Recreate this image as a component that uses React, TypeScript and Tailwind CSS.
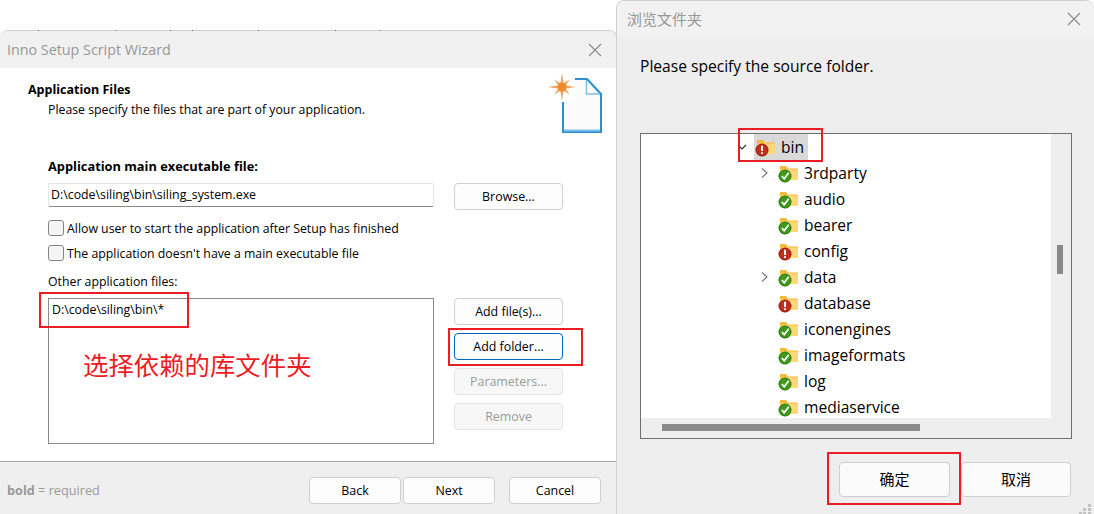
import React from "react";

const uiFont = "font-['Open_Sans','Noto_Sans_CJK_SC',sans-serif]";

const CloseIcon = () => (
  <svg width="14" height="14" viewBox="0 0 14 14" fill="none" stroke="#8a8a8a" strokeWidth="1.1">
    <path d="M1 1 L13 13 M13 1 L1 13" />
  </svg>
);

const WizardButton: React.FC<{ label: string; disabled?: boolean; focused?: boolean; className?: string }> = ({
  label,
  disabled,
  focused,
  className,
}) => (
  <button
    type="button"
    className={`h-[27px] rounded-[4px] border pt-[2px] text-[12.4px] leading-none ${className || "w-[109px]"} ${
      disabled
        ? "border-[#e4e4e4] bg-[#f7f7f7] text-[#9a9a9a]"
        : focused
          ? "border-[#0067c0] bg-[#fdfdfd] text-black"
          : "border-[#cfcfcf] bg-[#fdfdfd] text-black"
    }`}
  >
    {label}
  </button>
);

const CheckRow: React.FC<{ label: string; className?: string }> = ({ label, className }) => (
  <div className={`flex h-[16px] items-center gap-[3px] ${className || ""}`}>
    <span className="h-[16px] w-[16px] rounded-[3px] border border-[#858585] bg-[#f5f5f5]" />
    <span className="pt-[3px] text-[12.3px] leading-none text-black">{label}</span>
  </div>
);

const NewFileIcon = () => (
  <svg width="54" height="62" viewBox="0 0 54 62" fill="none" className="shrink-0">
    <path d="M13 30 V60 H52 V22 L38 7 H26 V30 Z" fill="#fbfbfb" />
    <path d="M14 30 V60 H52 V22 L38 7 H26" stroke="#2b8fd0" strokeWidth="2" />
    <path d="M15 58.5 H51" stroke="#7cbde6" strokeWidth="2" />
    <path d="M37.5 8 V22 H51" stroke="#7cbde6" strokeWidth="1.5" />
    {[0, 90, 180, 270].map((deg) => (
      <path key={deg} d="M13 1 L14.6 11 H11.4 Z" fill="#f2a362" transform={`rotate(${deg} 13 15)`} />
    ))}
    {[45, 135, 225, 315].map((deg) => (
      <path key={deg} d="M13 4 L14.4 11 H11.6 Z" fill="#f2a362" transform={`rotate(${deg} 13 15)`} />
    ))}
    <circle cx="13" cy="15" r="4.5" fill="#ef8a2c" />
  </svg>
);

const FolderIcon: React.FC<{ ok: boolean }> = ({ ok }) => (
  <svg width="20" height="20" viewBox="0 0 20 20" className="shrink-0">
    <path d="M2 3 H8 L10 5.5 H20 V17 H2 Z" fill="#f5b93c" />
    <rect x="2" y="6.5" width="18" height="10.5" fill="#fdd876" />
    <circle cx="7" cy="13" r="6.3" fill={ok ? "#3f9a1b" : "#bf2f1a"} />
    <circle cx="7" cy="13" r="6" fill="none" stroke={ok ? "#2b7410" : "#8f2010"} strokeWidth="0.8" />
    {ok ? (
      <path d="M3.8 13 L6.2 15.6 L10.8 9.8" fill="none" stroke="#fff" strokeWidth="1.7" />
    ) : (
      <path d="M7 8.8 V14 M7 15.2 V17" fill="none" stroke="#fff" strokeWidth="2" />
    )}
  </svg>
);

const folders: { name: string; ok: boolean; expandable?: boolean }[] = [
  { name: "3rdparty", ok: true, expandable: true },
  { name: "audio", ok: true },
  { name: "bearer", ok: true },
  { name: "config", ok: false },
  { name: "data", ok: true, expandable: true },
  { name: "database", ok: false },
  { name: "iconengines", ok: true },
  { name: "imageformats", ok: true },
  { name: "log", ok: true },
  { name: "mediaservice", ok: true },
];

const WizardWindow = () => (
  <div className="absolute left-0 top-[30px] flex h-[484px] w-[617px] flex-col overflow-hidden rounded-t-[8px] border-t border-r border-[#cfcfcf] bg-white">
    <div className="flex h-[37px] shrink-0 items-center justify-between bg-[#f1f1f1] pl-[7px] pr-[14px]">
      <span className="text-[14.3px] text-[#989898]">Inno Setup Script Wizard</span>
      <CloseIcon />
    </div>

    <div className="flex h-[90px] shrink-0 justify-between pl-[28px] pr-[13px] pt-[4px]">
      <div className="pt-[9px]">
        <div className="text-[12.5px] font-bold leading-[17px] text-black">Application Files</div>
        <div className="mt-[3px] pl-[20px] text-[12.3px] leading-[17px] text-black">
          Please specify the files that are part of your application.
        </div>
      </div>
      <NewFileIcon />
    </div>

    <div className="flex h-[303px] shrink-0 gap-[20px] pl-[48px]">
      <div className="flex w-[386px] flex-col">
        <div className="mb-[8px] h-[17px] text-[12.8px] font-bold leading-[17px] text-black">
          Application main executable file:
        </div>
        <div className="flex h-[24px] items-center rounded-[2px] border border-[#e6e6e6] border-b-[#8a8a8a] pl-[2px] text-[12.35px] text-black">
          D:\code\siling\bin\siling_system.exe
        </div>
        <CheckRow className="mt-[13px]" label="Allow user to start the application after Setup has finished" />
        <CheckRow className="mt-[9px]" label="The application doesn't have a main executable file" />
        <div className="mb-[8px] mt-[13px] h-[16px] text-[12.3px] leading-[16px] text-black">Other application files:</div>
        <div className="h-[146px] border border-[#8a8a8a] pl-[3px] pt-[2px] text-[12.3px] leading-[17px] text-black">
          D:\code\siling\bin\*
        </div>
      </div>
      <div className="flex flex-col gap-[8px] pt-[25px]">
        <WizardButton label="Browse..." className="mb-[80px] w-[109px]" />
        <WizardButton label="Add file(s)..." />
        <WizardButton label="Add folder..." focused />
        <WizardButton label="Parameters..." disabled />
        <WizardButton label="Remove" disabled />
      </div>
    </div>

    <div className="flex flex-1 items-center justify-between border-t border-[#a9a9a9] bg-[#efefef] pl-[7px] pr-[15px] pt-[4px]">
      <span className="pt-[2px] text-[12.7px] text-[#9a9a9a]">
        <b>bold</b> = required
      </span>
      <div className="flex">
        <WizardButton label="Back" className="w-[92px]" />
        <WizardButton label="Next" className="ml-[2px] w-[92px]" />
        <WizardButton label="Cancel" className="ml-[14px] w-[92px]" />
      </div>
    </div>
  </div>
);

const BrowseWindow = () => (
  <div className="absolute left-[616px] top-0 flex h-[514px] w-[478px] flex-col overflow-hidden rounded-t-[8px] border-l border-t border-[#d0d0d0] bg-[#eeeeee]">
    <div className="flex h-[37px] shrink-0 items-center justify-between bg-[#f2f2f2] pb-[1px] pl-[10px] pr-[13px]">
      <span className="text-[15px] text-[#989898]">浏览文件夹</span>
      <CloseIcon />
    </div>

    <div className="flex flex-1 flex-col pl-[23px] pr-[22px]">
      <div className="mt-[17px] h-[22px] text-[15.6px] leading-[22px] text-black">Please specify the source folder.</div>

      <div className="mt-[56px] h-[306px] border border-[#707070]">
        <div className="flex h-[284px]">
          <div className="h-[284px] w-[410px] overflow-hidden bg-white">
            <div className="flex h-[26px] items-center pl-[96px]">
              <svg width="10" height="10" viewBox="0 0 10 10" fill="none" stroke="#333" strokeWidth="1.2">
                <path d="M1 3 L5 7 L9 3" />
              </svg>
              <div className="ml-[7px] flex h-[26px] w-[54px] items-center bg-[#d9d9d9] pl-[1px]">
                <FolderIcon ok={false} />
                <span className="ml-[6px] pt-[2px] text-[15.6px] text-black">bin</span>
              </div>
            </div>
            {folders.map((f) => (
              <div key={f.name} className="flex h-[26px] items-center pl-[119px]">
                <span className="flex w-[18px] shrink-0">
                  {f.expandable && (
                    <svg width="10" height="12" viewBox="0 0 10 12" fill="none" stroke="#777" strokeWidth="1.2">
                      <path d="M2 1.5 L7 6 L2 10.5" />
                    </svg>
                  )}
                </span>
                <FolderIcon ok={f.ok} />
                <span className="ml-[6px] pt-[2px] text-[15.6px] text-black">{f.name}</span>
              </div>
            ))}
          </div>
          <div className="flex-1 pl-[6px] pt-[111px]">
            <div className="h-[29px] w-[6px] bg-[#8a8a8a]" />
          </div>
        </div>
        <div className="ml-[21px] mt-[6px] h-[7px] w-[258px] bg-[#8a8a8a]" />
      </div>

      <div className="mt-[23px] flex justify-end gap-[11px] pr-[1px]">
        <button
          type="button"
          className="h-[35px] w-[111px] rounded-[4px] border border-[#cfcfcf] bg-[#fbfbfb] text-[15px] text-black"
        >
          确定
        </button>
        <button
          type="button"
          className="h-[35px] w-[110px] rounded-[4px] border border-[#cfcfcf] bg-[#fbfbfb] text-[15px] text-black"
        >
          取消
        </button>
      </div>
    </div>
  </div>
);

export default function App() {
  return (
    <div className={`relative h-[514px] w-[1094px] overflow-hidden bg-white ${uiFont}`}>
      <WizardWindow />
      <BrowseWindow />

      {/* stray pixels from the window behind, along the wizard's top edge */}
      <div className="absolute left-[38px] top-[30px] h-[1px] w-[1px] bg-[#2e8b57]" />
      <div className="absolute left-[115px] top-[30px] h-[1px] w-[1px] bg-[#8f9a3a]" />
      <div className="absolute left-[170px] top-[30px] h-[1px] w-[1px] bg-[#2e8b57]" />
      <div className="absolute left-[192px] top-[30px] h-[1px] w-[1px] bg-[#2e8b57]" />
      <div className="absolute left-[258px] top-[30px] h-[1px] w-[1px] bg-[#2e8b57]" />
      <div className="absolute left-[335px] top-[30px] h-[1px] w-[1px] bg-[#2e8b57]" />
      <div className="absolute left-[379px] top-[30px] h-[1px] w-[1px] bg-[#8f9a3a]" />

      {/* resize grip */}
      <svg width="15" height="10" viewBox="0 0 15 10" fill="#c2c2c2" className="absolute bottom-0 right-0">
        <rect x="9" y="0" width="3" height="3" />
        <rect x="4" y="4" width="3" height="3" />
        <rect x="9" y="4" width="3" height="3" />
        <rect x="0" y="8" width="3" height="2" />
        <rect x="4" y="8" width="3" height="2" />
        <rect x="9" y="8" width="3" height="2" />
      </svg>

      {/* red annotations drawn over the screenshot */}
      <div className="absolute left-[39px] top-[292px] h-[36px] w-[150px] border-2 border-[#ec1c24]" />
      <div className="absolute left-[448px] top-[328px] h-[38px] w-[135px] border-2 border-[#ec1c24]" />
      <div className="absolute left-[738px] top-[128px] h-[34px] w-[85px] border-2 border-[#ec1c24]" />
      <div className="absolute left-[827px] top-[452px] h-[53px] w-[134px] border-2 border-[#ec1c24]" />
      <div className="absolute left-[83px] top-[349px] text-[25.4px] leading-[32px] text-[#ec1c24]">选择依赖的库文件夹</div>
    </div>
  );
}
